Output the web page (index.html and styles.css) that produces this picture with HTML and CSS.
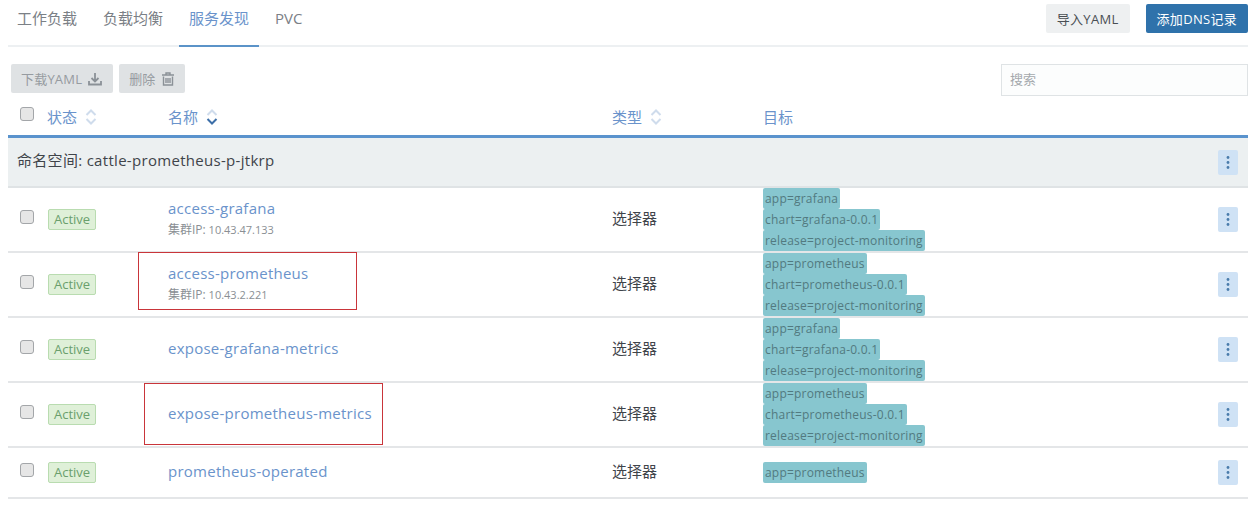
FILE: index.html
```html
<!DOCTYPE html>
<html lang="en">
<head>
  <meta charset="UTF-8" />
  <title>服务发现</title>
  <link rel="stylesheet" href="styles.css">
</head>
<body>
  <svg class="sprites" width="0" height="0" aria-hidden="true">
    <symbol id="sort" viewBox="0 0 12 16">
      <path d="M1.500 6 6 1.500 10.500 6M1.500 10 6 14.500 10.500 10" fill="none" stroke="#cfdcec" stroke-width="2"/>
    </symbol>
    <symbol id="sort-down" viewBox="0 0 12 16">
      <path d="M1.500 6 6 1.500 10.500 6" fill="none" stroke="#cfdcec" stroke-width="2"/>
      <path d="M1.500 10 6 14.500 10.500 10" fill="none" stroke="#3d6fa8" stroke-width="2"/>
    </symbol>
    <symbol id="dots" viewBox="0 0 20 25">
      <circle cx="10" cy="7.500" r="1.400" fill="#4a7cab"/>
      <circle cx="10" cy="12.500" r="1.400" fill="#4a7cab"/>
      <circle cx="10" cy="17.500" r="1.400" fill="#4a7cab"/>
    </symbol>
  </svg>

  <div class="page">
    <nav class="tabs">
      <a class="tab">工作负载</a>
      <a class="tab">负载均衡</a>
      <a class="tab active">服务发现</a>
      <a class="tab">PVC</a>
      <div class="tab-actions">
        <button class="btn btn-light">导入YAML</button>
        <button class="btn btn-primary">添加DNS记录</button>
      </div>
    </nav>

    <div class="toolbar">
      <button class="btn btn-disabled">下载YAML
        <svg width="14" height="14" viewBox="0 0 14 14"><path d="M7 1v8M3.500 6 7 9.500 10.500 6M1 9v3.500h12V9" fill="none" stroke="#8b9197" stroke-width="1.800"/></svg>
      </button>
      <button class="btn btn-disabled">删除
        <svg width="12" height="14" viewBox="0 0 12 14"><path d="M0 3h12M4 3V1h4v2M1.500 4.500V13h9V4.500M4 6v5M6 6v5M8 6v5" fill="none" stroke="#8b9197" stroke-width="1.400"/></svg>
      </button>
      <input class="search" type="text" placeholder="搜索">
    </div>

    <div class="row head">
      <input class="check" type="checkbox">
      <span class="col-title">状态 <svg class="sort" width="12" height="16"><use href="#sort"/></svg></span>
      <span class="col-title">名称 <svg class="sort" width="12" height="16"><use href="#sort-down"/></svg></span>
      <span class="col-title">类型 <svg class="sort" width="12" height="16"><use href="#sort"/></svg></span>
      <span class="col-title">目标</span>
    </div>

    <div class="group">
      <span class="group-name">命名空间: cattle-prometheus-p-jtkrp</span>
      <button class="more"><svg width="20" height="25"><use href="#dots"/></svg></button>
    </div>

    <div class="row item">
      <input class="check" type="checkbox">
      <span class="badge">Active</span>
      <div class="name-cell">
        <a class="name">access-grafana</a>
        <div class="ip"><span class="ip-label">集群IP:</span> 10.43.47.133</div>
      </div>
      <span class="type">选择器</span>
      <div class="tags">
        <span class="tag">app=grafana</span>
        <span class="tag">chart=grafana-0.0.1</span>
        <span class="tag">release=project-monitoring</span>
      </div>
      <button class="more"><svg width="20" height="25"><use href="#dots"/></svg></button>
    </div>

    <div class="row item">
      <input class="check" type="checkbox">
      <span class="badge">Active</span>
      <div class="name-cell">
        <a class="name">access-prometheus</a>
        <div class="ip"><span class="ip-label">集群IP:</span> 10.43.2.221</div>
      </div>
      <span class="type">选择器</span>
      <div class="tags">
        <span class="tag">app=prometheus</span>
        <span class="tag">chart=prometheus-0.0.1</span>
        <span class="tag">release=project-monitoring</span>
      </div>
      <button class="more"><svg width="20" height="25"><use href="#dots"/></svg></button>
    </div>

    <div class="row item">
      <input class="check" type="checkbox">
      <span class="badge">Active</span>
      <a class="name">expose-grafana-metrics</a>
      <span class="type">选择器</span>
      <div class="tags">
        <span class="tag">app=grafana</span>
        <span class="tag">chart=grafana-0.0.1</span>
        <span class="tag">release=project-monitoring</span>
      </div>
      <button class="more"><svg width="20" height="25"><use href="#dots"/></svg></button>
    </div>

    <div class="row item">
      <input class="check" type="checkbox">
      <span class="badge">Active</span>
      <a class="name">expose-prometheus-metrics</a>
      <span class="type">选择器</span>
      <div class="tags">
        <span class="tag">app=prometheus</span>
        <span class="tag">chart=prometheus-0.0.1</span>
        <span class="tag">release=project-monitoring</span>
      </div>
      <button class="more"><svg width="20" height="25"><use href="#dots"/></svg></button>
    </div>

    <div class="row item item-short">
      <input class="check" type="checkbox">
      <span class="badge">Active</span>
      <a class="name">prometheus-operated</a>
      <span class="type">选择器</span>
      <div class="tags">
        <span class="tag">app=prometheus</span>
      </div>
      <button class="more"><svg width="20" height="25"><use href="#dots"/></svg></button>
    </div>

    <!-- red annotation boxes drawn over the screenshot -->
    <div class="mark mark-one"></div>
    <div class="mark mark-two"></div>
  </div>
</body>
</html>
```

FILE: styles.css
```css
* {
  box-sizing: border-box;
}

body {
  margin: 0;
  background: #fff;
  color: #4a4f54;
  font-family: "Open Sans", "Noto Sans CJK SC", sans-serif;
  font-size: 15px;
  line-height: 20px;
}

.sprites {
  position: absolute;
}

.page {
  position: relative;
  width: 1240px;
  margin-left: 8px;
}

.tabs {
  display: flex;
  align-items: flex-start;
  height: 47px;
  border-bottom: 2px solid #edf0f2;
}

.tab {
  height: 47px;
  padding: 8px 10px 0;
  margin-right: 6px;
  color: #7b8086;
}

.tab:first-child {
  margin-left: -1px;
}

.tab.active {
  color: #6a93cb;
  border-bottom: 2px solid #5b93c8;
}

.tab-actions {
  display: flex;
  gap: 16px;
  margin-left: auto;
  padding-top: 4px;
}

.btn {
  display: inline-flex;
  align-items: center;
  gap: 6px;
  height: 29px;
  padding: 0 11px;
  border: 0;
  border-radius: 2px;
  font-family: inherit;
  font-size: 13px;
  letter-spacing: 0.3px;
}

.btn-light {
  background: #eef0f1;
  color: #4a4f54;
}

.btn-primary {
  background: #2f72ab;
  color: #fff;
}

.btn-disabled {
  padding: 0 10px 0 10px;
  background: #dfe2e4;
  color: #969ba0;
  letter-spacing: 0.2px;
}

.btn-disabled svg {
  margin-right: 1px;
}

.toolbar {
  display: flex;
  align-items: flex-start;
  gap: 6px;
  padding: 17px 0 0 3px;
  height: 87px;
}

.search {
  width: 247px;
  height: 32px;
  margin-left: auto;
  padding: 0 8px 2px;
  border: 1px solid #dfe3e5;
  background: #fcfdfd;
  font-family: inherit;
  font-size: 13px;
}

.search::placeholder {
  color: #a5a9ad;
}

.row {
  display: grid;
  grid-template-columns: 40px 120px 444px 151px 1fr 30px;
  align-items: center;
  padding-right: 10px;
}

.head {
  grid-template-columns: 39px 121px 444px 151px 1fr;
  height: 37px;
  margin-top: -33px;
  padding-bottom: 3px;
  border-bottom: 3px solid #5a93cd;
}

.col-title {
  display: flex;
  align-items: center;
  gap: 8px;
  color: #6a93cb;
}

.check {
  appearance: none;
  width: 14px;
  height: 14px;
  margin: 0 0 0 12px;
  background: #e6e6e6;
  border: 1px solid #a3a6a9;
  border-radius: 3px;
  position: relative;
  top: -3px;
}

.group {
  display: flex;
  align-items: center;
  justify-content: space-between;
  height: 50px;
  padding: 0 10px 0 9px;
  background: #ecf0f1;
  border-bottom: 2px solid #dfe3e5;
  color: #3f444a;
}

.group-name {
  margin-bottom: 4px;
  letter-spacing: 0.3px;
}

.item {
  height: 65px;
  border-bottom: 2px solid #e4e6e8;
}

.item-short {
  height: 51px;
}

.badge {
  justify-self: start;
  padding: 0 5px;
  height: 21px;
  line-height: 19px;
  background: #dff0d8;
  border: 1px solid #b9dcb0;
  border-radius: 2px;
  color: #6a9f6c;
  font-size: 13px;
}

.name {
  margin-bottom: 4px;
  color: #6a93cb;
  line-height: 22px;
  letter-spacing: 0.25px;
}

.ip {
  margin-top: 3px;
  color: #8a8f94;
  font-size: 11px;
  line-height: 15px;
}

.ip-label {
  font-size: 12px;
}

.name-cell {
  position: relative;
  top: -1px;
  margin-bottom: 4px;
}

.type {
  margin-bottom: 4px;
  color: #3f444a;
}

.tags {
  display: flex;
  flex-direction: column;
  align-items: flex-start;
}

.tag {
  height: 21px;
  padding: 0 2px;
  line-height: 21px;
  background: #87c6cf;
  border-radius: 2px;
  color: #527a80;
  font-size: 12px;
  letter-spacing: 0.2px;
}

.more {
  display: flex;
  width: 20px;
  height: 25px;
  padding: 0;
  border: 0;
  border-radius: 2px;
  background: #cfe2f5;
}

.row .more {
  justify-self: end;
}

.mark {
  position: absolute;
  border: 1px solid #c9353a;
}

.mark-one {
  left: 130px;
  top: 252px;
  width: 219px;
  height: 58px;
}

.mark-two {
  left: 136px;
  top: 383px;
  width: 239px;
  height: 62px;
}
```
